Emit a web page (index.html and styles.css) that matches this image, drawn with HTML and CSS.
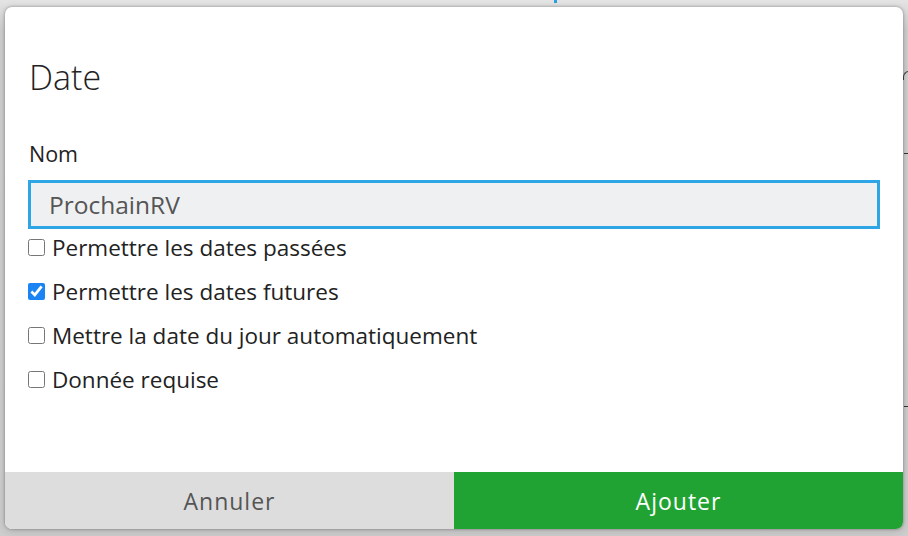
FILE: index.html
```html
<!DOCTYPE html>
<html lang="fr">
<head>
<meta charset="utf-8">
<title>Date</title>
<link rel="stylesheet" href="styles.css">
</head>
<body>
<div class="backdrop">
  <span class="bg-tick"></span>
  <span class="bg-line bg-line-1"></span>
  <span class="bg-line bg-line-2"></span>
  <span class="bg-curve"></span>
  <div class="modal">
    <div class="modal-body">
      <h1 class="modal-title">Date</h1>
      <label class="field-label" for="nom">Nom</label>
      <input class="field-input" id="nom" type="text" value="ProchainRV">
      <div class="options">
        <label class="option"><input type="checkbox" class="check"><span>Permettre les dates passées</span></label>
        <label class="option"><input type="checkbox" class="check" checked><span>Permettre les dates futures</span></label>
        <label class="option"><input type="checkbox" class="check"><span>Mettre la date du jour automatiquement</span></label>
        <label class="option"><input type="checkbox" class="check"><span>Donnée requise</span></label>
      </div>
    </div>
    <div class="modal-actions">
      <button class="btn btn-cancel" type="button">Annuler</button>
      <button class="btn btn-add" type="button">Ajouter</button>
    </div>
  </div>
</div>
</body>
</html>
```
FILE: styles.css
```css
html, body {
  margin: 0;
  padding: 0;
  height: 100%;
}
body {
  background: #cdcdcd;
  font-family: "Open Sans", "Noto Sans", sans-serif;
  overflow: hidden;
}
.backdrop {
  position: relative;
  width: 908px;
  height: 536px;
  padding: 7px 0 0 5px;
  box-sizing: border-box;
  background: linear-gradient(#e4e4e4, #cfcfcf 30px, #cdcdcd);
}
.bg-tick {
  position: absolute;
  left: 554px;
  top: 0;
  width: 3px;
  height: 3px;
  background: #2e9fe0;
}
.bg-line {
  position: absolute;
  left: 904px;
  width: 4px;
  height: 1px;
  background: #333;
}
.bg-line-1 { top: 153px; }
.bg-line-2 { top: 406px; }
.bg-curve {
  position: absolute;
  left: 903px;
  top: 71px;
  width: 8px;
  height: 8px;
  border-top: 1px solid #444;
  border-left: 1px solid #444;
  border-top-left-radius: 6px;
}
.modal {
  position: relative;
  width: 898px;
  height: 522px;
  background: #fff;
  border-radius: 7px;
  overflow: hidden;
  box-shadow: 0 0 3px rgba(0,0,0,0.35), 0 2px 8px rgba(0,0,0,0.15);
  display: flex;
  flex-direction: column;
}
.modal-body {
  flex: 1;
  padding: 0 23px;
}
.modal-title {
  margin: 50px 0 0 1px;
  font-size: 34px;
  font-weight: 300;
  line-height: 40px;
  color: #222;
}
.field-label {
  display: block;
  margin: 43px 0 0 1px;
  font-size: 21.5px;
  line-height: 28px;
  color: #222;
}
.field-input {
  display: block;
  box-sizing: border-box;
  width: 852px;
  height: 49px;
  margin-top: 12px;
  padding: 0 0 0 18px;
  border: 3px solid #2ea6e6;
  background: #eff0f2;
  font-family: inherit;
  font-size: 24.5px;
  color: #555;
  outline: none;
}
.options {
  display: flex;
  flex-direction: column;
  margin-top: -4px;
}
.option {
  display: flex;
  align-items: center;
  gap: 7px;
  height: 44px;
  font-size: 22.5px;
  color: #222;
}
.check {
  width: 17px;
  height: 17px;
  margin: 0;
  accent-color: #1b84f5;
}
.modal-actions {
  display: grid;
  grid-template-columns: 1fr 1fr;
  height: 57px;
}
.btn {
  border: 0;
  margin: 0;
  font-family: inherit;
  font-size: 23px;
  letter-spacing: 1px;
  cursor: pointer;
}
.btn-cancel {
  background: #dddddd;
  color: #555;
}
.btn-add {
  background: #21a333;
  color: #fff;
}
```
